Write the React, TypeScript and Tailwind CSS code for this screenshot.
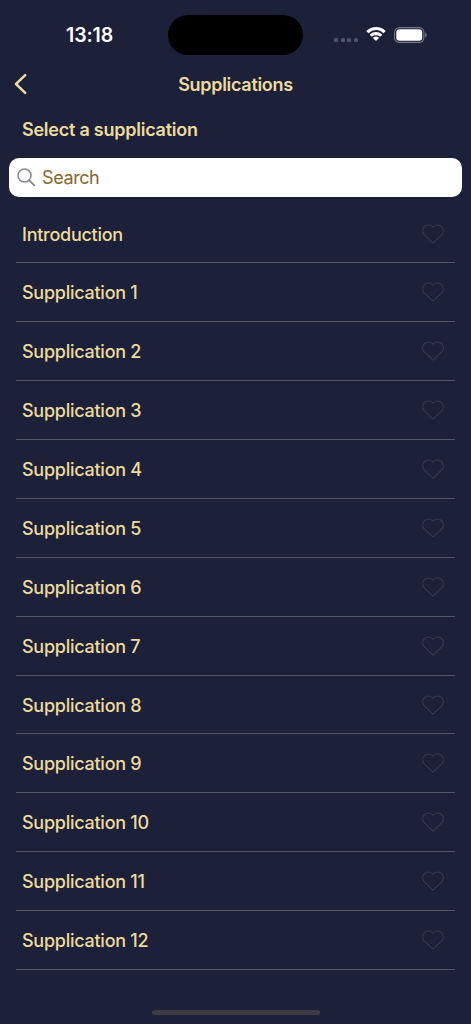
const supplications = [
  'Introduction',
  ...Array.from({ length: 12 }, (_, i) => `Supplication ${i + 1}`),
];

function StatusBar() {
  return (
    <div className="flex h-[54px] shrink-0 items-start pt-[15px]">
      <div className="w-[168px] pt-[7px] pl-[66px] text-[19.5px] leading-[26px] font-semibold tracking-[-0.1px] text-white">
        13:18
      </div>
      <div className="h-[39.5px] w-[134.5px] rounded-full bg-black" />
      <div className="flex h-[39px] flex-1 items-center pl-[31.5px]">
        <div className="mt-[11px] flex gap-[2.5px]">
          <span className="size-[4px] rounded-[1.5px] bg-[#53566a]" />
          <span className="size-[4px] rounded-[1.5px] bg-[#53566a]" />
          <span className="size-[4px] rounded-[1.5px] bg-[#53566a]" />
          <span className="size-[4px] rounded-[1.5px] bg-[#53566a]" />
        </div>
        {/* Wi-Fi */}
        <svg className="ml-[8px] h-[15px] w-[20px]" viewBox="0 0 20 15" fill="#fff">
          <path d="M10 3.1c2.8 0 5.3 1.1 7.2 2.9.2.2.4.2.6 0l1.6-1.6c.2-.2.2-.5 0-.7A13.6 13.6 0 0 0 10 0C6.4 0 3.1 1.4.6 3.7c-.2.2-.2.5 0 .7L2.2 6c.2.2.4.2.6 0A10.5 10.5 0 0 1 10 3.1Z" />
          <path d="M10 8.2c1.5 0 2.8.5 3.8 1.4.2.2.4.2.6 0L16 8c.2-.2.2-.5 0-.7a8.7 8.7 0 0 0-12 0c-.2.2-.2.5 0 .7l1.6 1.6c.2.2.4.2.6 0 1-.9 2.3-1.4 3.8-1.4Z" />
          <path d="M12.8 11.3c.2-.2.2-.5 0-.7a4.3 4.3 0 0 0-5.6 0c-.2.2-.2.5 0 .7l2.5 2.5c.2.2.4.2.6 0Z" />
        </svg>
        {/* Battery */}
        <svg className="ml-[8px] h-[16px] w-[34px]" viewBox="0 0 34 16">
          <rect x="0.6" y="0.6" width="29.3" height="14.8" rx="4.7" fill="none" stroke="#777a8a" strokeWidth="1.1" />
          <rect x="2.3" y="2.3" width="25.9" height="11.4" rx="3.3" fill="#fff" />
          <path d="M31.2 5.5c1 .4 1.6 1.4 1.6 2.5s-.6 2.1-1.6 2.5Z" fill="#777a8a" />
        </svg>
      </div>
    </div>
  );
}

function HeartIcon() {
  return (
    <svg
      className="h-[20px] w-[22px]"
      viewBox="0 0 22 20"
      fill="none"
      stroke="#383b4c"
      strokeWidth="1.1"
      strokeLinejoin="round"
    >
      <path d="M11 19.2 2.5 11.2C.1 8.8.1 5 2.3 2.7 4.7.3 8.7.3 11 3.1 13.300.3 17.300.3 19.700 2.700c2.200 2.300 2.200 6.100-.2 8.500Z" />
    </svg>
  );
}

export default function App() {
  return (
    <div className="flex h-screen w-full flex-col overflow-hidden bg-[#1c2038] font-['Inter','Liberation_Sans',sans-serif] text-[18px] text-[#ecdb9d]">
      <StatusBar />

      {/* Header */}
      <header className="grid h-[60px] shrink-0 grid-cols-[60px_1fr_60px] items-center">
        <button className="pl-[14px]" aria-label="Back">
          <svg
            className="h-[22px] w-[14px]"
            viewBox="0 0 14 22"
            fill="none"
            stroke="currentColor"
            strokeWidth="2.5"
            strokeLinecap="round"
            strokeLinejoin="round"
          >
            <path d="M11.2 2.2 2 11l9.2 8.800" />
          </svg>
        </button>
        <h1 className="text-center font-semibold tracking-[-0.3px]">Supplications</h1>
      </header>

      <h2 className="h-[44px] shrink-0 pl-[22px] leading-[31px] font-semibold tracking-[-0.24px]">
        Select a supplication
      </h2>

      {/* Search */}
      <div className="mx-[9px] flex h-[38.5px] shrink-0 items-center rounded-[10px] bg-white pl-[8px]">
        <svg
          className="size-[19px]"
          viewBox="0 0 19 19"
          fill="none"
          stroke="#8a8a8e"
          strokeWidth="1.5"
          strokeLinecap="round"
        >
          <circle cx="7.5" cy="7.5" r="6.5" />
          <path d="m12.3 12.3 5 5" strokeWidth="1.9" />
        </svg>
        <span className="ml-[6px] pt-px text-[18px] tracking-[-0.4px] text-[#87662f]">Search</span>
      </div>

      {/* List */}
      <ul className="mx-[16px] pt-[8.1px]">
        {supplications.map((title) => (
          <li
            key={title}
            className="flex h-[58.875px] items-center justify-between border-b border-[#555767] pr-[11px] pl-[6px] font-medium tracking-[-0.26px]"
          >
            <span className="pt-px">{title}</span>
            <HeartIcon />
          </li>
        ))}
      </ul>

      {/* Home indicator */}
      <div className="mt-auto mb-[9px] h-[5px] w-[168px] shrink-0 self-center rounded-full bg-[#3b3c44]" />
    </div>
  );
}
